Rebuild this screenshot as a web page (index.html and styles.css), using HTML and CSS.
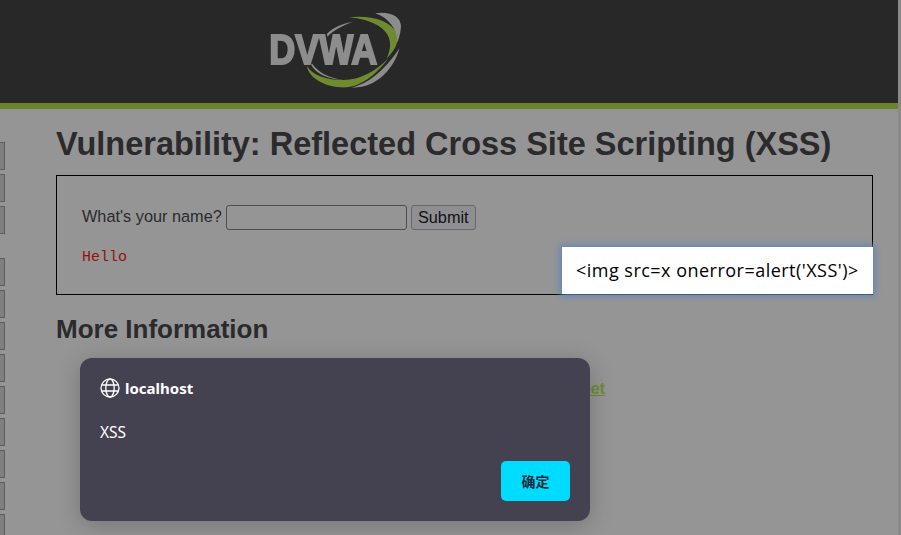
FILE: index.html
```html
<!DOCTYPE html>
<html lang="zh">
<head>
  <meta charset="UTF-8" />
  <title>Vulnerability: Reflected Cross Site Scripting (XSS)</title>
  <link rel="stylesheet" href="styles.css">
</head>
<body>
  <div id="header">
    <svg class="logo" viewBox="75 30 410 240" width="137" height="80">
      <path class="swoosh-green" d="M325 52C390 45 450 60 470 100C478 125 465 150 440 175C455 140 455 110 425 85C395 62 360 55 325 52Z"/>
      <path class="swoosh-green" d="M200 197C205 235 260 265 320 262C370 258 415 215 445 175C405 215 360 240 310 240C260 240 215 225 200 197Z"/>
      <path class="swoosh-gray" d="M405 40C450 33 487 50 482 85C480 105 475 120 470 130C475 95 450 55 405 40Z"/>
      <path class="swoosh-gray" d="M478 145C462 205 410 265 335 263C385 250 430 215 478 145Z"/>
      <path class="swoosh-gray" d="M260 102C280 80 310 70 340 65C310 75 280 90 262 110Z"/>
      <path class="swoosh-gray" d="M215 190C235 220 270 235 310 240C270 238 230 225 213 195Z"/>
      <text class="logo-text" x="87" y="193" textLength="324" lengthAdjust="spacingAndGlyphs">DVWA</text>
    </svg>
  </div>

  <div id="page">
    <div id="menu">
      <div class="menu-group">
        <div class="menu-btn"></div>
        <div class="menu-btn"></div>
        <div class="menu-btn"></div>
      </div>
      <div class="menu-group">
        <div class="menu-btn"></div>
        <div class="menu-btn"></div>
        <div class="menu-btn"></div>
        <div class="menu-btn"></div>
        <div class="menu-btn"></div>
        <div class="menu-btn"></div>
        <div class="menu-btn"></div>
        <div class="menu-btn"></div>
        <div class="menu-btn"></div>
      </div>
    </div>

    <div id="main">
      <h1>Vulnerability: Reflected Cross Site Scripting (XSS)</h1>

      <div class="vulnerable-box">
        <form class="name-form">
          <span class="name-label">What's your name?</span>
          <input type="text" class="name-input">
          <button type="button" class="submit-btn">Submit</button>
        </form>
        <pre class="hello">Hello </pre>
      </div>

      <h2>More Information</h2>
      <ul class="links">
        <li><a href="#">xss-filter-evasion-cheatsheet</a></li>
      </ul>
    </div>

    <div class="suggestion">&lt;img src=x onerror=alert('XSS')&gt;</div>
  </div>

  <div class="scroll-strip"></div>

  <div class="dialog">
    <div class="dialog-title">
      <svg class="globe" viewBox="0 0 20 20" width="20" height="20">
        <circle cx="10" cy="10" r="9"/>
        <ellipse cx="10" cy="10" rx="4.2" ry="9"/>
        <path d="M1.8 7H18.2M1.8 13H18.2"/>
      </svg>
      <span>localhost</span>
    </div>
    <div class="dialog-msg">XSS</div>
    <div class="dialog-actions">
      <button type="button" class="ok-btn">确定</button>
    </div>
  </div>
</body>
</html>
```

FILE: styles.css
```css
html, body {
  height: 100%;
  overflow: hidden;
}

body {
  margin: 0;
  background-color: #959596;
  font-family: "Liberation Sans", Arial, sans-serif;
  color: #2b2b2d;
  font-size: 16px;
}

#header {
  height: 103px;
  background-color: #282829;
  border-bottom: 6px solid #6b832c;
  padding-left: 265px;
}

.logo {
  display: block;
  padding-top: 10px;
  filter: blur(0.4px);
}

.swoosh-green {
  fill: #6f8b2f;
}

.swoosh-gray {
  fill: #8c8c8c;
}

.logo-text {
  font-family: "Liberation Sans", Arial, sans-serif;
  font-weight: bold;
  font-size: 126px;
  fill: #8d8d8d;
  stroke: #8d8d8d;
  stroke-width: 6;
}

#page {
  position: relative;
  display: flex;
}

#menu {
  width: 5px;
  padding-top: 33px;
  display: flex;
  flex-direction: column;
  gap: 24px;
  flex-shrink: 0;
}

.menu-group {
  display: flex;
  flex-direction: column;
  gap: 4px;
}

.menu-btn {
  height: 26px;
  background-color: #7f7f81;
  border: 1px solid #5f5f61;
  border-left: none;
}

#main {
  margin-left: 51px;
  width: 817px;
}

h1 {
  font-size: 32.5px;
  line-height: 37px;
  margin: 17px 0 12px;
  color: #2b2a2c;
  white-space: nowrap;
}

.vulnerable-box {
  border: 1px solid #000;
  height: 118px;
  padding: 0 25px;
}

.name-form {
  display: flex;
  align-items: center;
  gap: 4px;
  margin-top: 29px;
  height: 25px;
}

.name-label {
  font-size: 16.3px;
  margin-bottom: 2px;
}

.name-input {
  width: 181px;
  height: 25px;
  box-sizing: border-box;
  background: transparent;
  border: 1px solid #4c4c50;
  border-radius: 3px;
  padding: 0;
}

.submit-btn {
  height: 25px;
  width: 65px;
  padding: 0;
  font-family: inherit;
  font-size: 16.3px;
  color: #111;
  background-color: #8f8f92;
  border: 1px solid #68686c;
  border-radius: 3px;
}

.hello {
  margin: 19px 0 0;
  font-family: "Liberation Mono", monospace;
  font-size: 15px;
  color: #961010;
}

h2 {
  font-size: 26px;
  line-height: 28px;
  margin: 20px 0 0;
  color: #2b2a2c;
}

.links {
  margin: 36px 0 0;
  padding: 0;
  width: 549px;
  text-align: right;
  list-style: none;
}

.links li {
  line-height: 20px;
  white-space: nowrap;
}

.links a {
  font-weight: bold;
  color: #6f8b2f;
}

.suggestion {
  position: absolute;
  left: 562px;
  top: 138px;
  width: 311px;
  height: 47px;
  box-sizing: border-box;
  padding-left: 14px;
  background-color: #fff;
  color: #000;
  font-family: "Open Sans", sans-serif;
  font-size: 18px;
  letter-spacing: 0.48px;
  line-height: 47px;
  white-space: pre;
  box-shadow: 0 0 6px 2px #5f86b8;
}

.scroll-strip {
  position: absolute;
  top: 0;
  right: 0;
  bottom: 0;
  width: 3px;
  background-color: #89898a;
}

.dialog {
  position: absolute;
  left: 80px;
  top: 358px;
  width: 510px;
  height: 163px;
  box-sizing: border-box;
  padding: 19px 20px 20px;
  background-color: #444250;
  border-radius: 12px;
  box-shadow: 0 4px 24px rgba(0, 0, 0, 0.22);
  color: #fff;
  font-family: "Noto Sans", "Noto Sans CJK SC", sans-serif;
}

.dialog-title {
  display: flex;
  align-items: center;
  gap: 5px;
  font-size: 15px;
  font-weight: bold;
  height: 21px;
}

.globe {
  fill: none;
  stroke: #fff;
  stroke-width: 1.3;
}

.dialog-msg {
  font-size: 15.5px;
  margin-top: 24px;
  line-height: 20px;
}

.dialog-actions {
  display: flex;
  justify-content: flex-end;
  margin-top: 19px;
}

.ok-btn {
  width: 69px;
  height: 40px;
  padding: 0;
  border: none;
  border-radius: 5px;
  background-color: #00dcff;
  color: #1e2a38;
  font-family: "Noto Sans CJK SC", sans-serif;
  font-size: 14px;
  font-weight: 700;
}
```
